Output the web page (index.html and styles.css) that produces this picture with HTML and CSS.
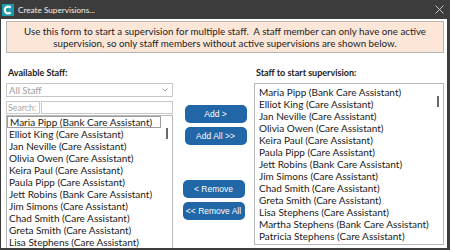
FILE: index.html
```html
<!DOCTYPE html>
<html>
<head>
<meta charset="utf-8">
<link rel="stylesheet" href="styles.css">
</head>
<body>
<div class="window">
  <div class="titlebar">
    <svg class="app-icon" width="12" height="12" viewBox="0 0 12 12">
      <rect width="12" height="12" fill="#1d9bab"/>
      <path d="M8.6 3.6 A3.4 3.4 0 1 0 8.6 8.4" fill="none" stroke="#fff" stroke-width="2.2"/>
    </svg>
    <span class="title">Create Supervisions...</span>
    <svg class="close" width="9" height="9" viewBox="0 0 9 9">
      <path d="M0.5 0.5 L8.5 8.5 M8.5 0.5 L0.5 8.5" stroke="#c8c8c8" stroke-width="1"/>
    </svg>
  </div>
  <div class="content">
    <div class="notice">Use this form to start a supervision for multiple staff.&nbsp; A staff member can only have one active<br>supervision, so only staff members without active supervisions are shown below.</div>
    <div class="panes">
      <div class="pane left">
        <div class="label">Available Staff:</div>
        <div class="select"><span>All Staff</span>
          <svg class="chev" width="6" height="4" viewBox="0 0 6 4"><path d="M0.5 0.5 L3 3 L5.5 0.5" fill="none" stroke="#9a9a9a" stroke-width="0.9"/></svg>
        </div>
        <div class="search">
          <div class="search-label">Search:</div>
          <div class="search-input"></div>
        </div>
        <div class="list list-left">
          <div class="items">
            <div class="item focused">Maria Pipp (Bank Care Assistant)</div>
            <div class="item">Elliot King (Care Assistant)</div>
            <div class="item">Jan Neville (Care Assistant)</div>
            <div class="item">Olivia Owen (Care Assistant)</div>
            <div class="item">Keira Paul (Care Assistant)</div>
            <div class="item">Paula Pipp (Care Assistant)</div>
            <div class="item">Jett Robins (Bank Care Assistant)</div>
            <div class="item">Jim Simons (Care Assistant)</div>
            <div class="item">Chad Smith (Care Assistant)</div>
            <div class="item">Greta Smith (Care Assistant)</div>
            <div class="item">Lisa Stephens (Care Assistant)</div>
          </div>
          <div class="scroll"><div class="thumb"></div></div>
        </div>
      </div>
      <div class="pane middle">
        <div class="btn-group add-group">
          <button class="btn">Add &gt;</button>
          <button class="btn">Add All &gt;&gt;</button>
        </div>
        <div class="btn-group remove-group">
          <button class="btn">&lt; Remove</button>
          <button class="btn">&lt;&lt; Remove All</button>
        </div>
      </div>
      <div class="pane right">
        <div class="label">Staff to start supervision:</div>
        <div class="list list-right">
          <div class="items">
            <div class="item">Maria Pipp (Bank Care Assistant)</div>
            <div class="item">Elliot King (Care Assistant)</div>
            <div class="item">Jan Neville (Care Assistant)</div>
            <div class="item">Olivia Owen (Care Assistant)</div>
            <div class="item">Keira Paul (Care Assistant)</div>
            <div class="item">Paula Pipp (Care Assistant)</div>
            <div class="item">Jett Robins (Bank Care Assistant)</div>
            <div class="item">Jim Simons (Care Assistant)</div>
            <div class="item">Chad Smith (Care Assistant)</div>
            <div class="item">Greta Smith (Care Assistant)</div>
            <div class="item">Lisa Stephens (Care Assistant)</div>
            <div class="item">Martha Stephens (Bank Care Assistant)</div>
            <div class="item">Patricia Stephens (Care Assistant)</div>
          </div>
          <div class="scroll"><div class="thumb"></div></div>
        </div>
      </div>
    </div>
  </div>
</div>
</body>
</html>
```
FILE: styles.css
```css
* { box-sizing: border-box; }
html, body { margin: 0; padding: 0; }
body {
  width: 450px;
  height: 250px;
  overflow: hidden;
  background: #fff;
  font-family: Lato, "Liberation Sans", sans-serif;
  color: #1a1a1a;
}
.window {
  width: 450px;
  height: 250px;
  border-left: 1px solid #3c3c3c;
  border-right: 3px solid #3c3c3c;
  border-bottom: 2px solid #3c3c3c;
  display: flex;
  flex-direction: column;
  overflow: hidden;
}
.titlebar {
  height: 19px;
  flex: none;
  background: #3c3c3c;
  display: flex;
  align-items: center;
  padding-left: 2px;
  padding-right: 6px;
  margin-left: -1px;
  margin-right: -3px;
}
.app-icon { flex: none; margin-top: 1px; }
.title {
  margin-left: 4px;
  font-family: Lato, sans-serif;
  font-size: 8.2px;
  color: #f0f0f0;
  flex: 1;
}
.close { flex: none; }
.content {
  flex: 1;
  padding: 2px 3px 0 5px;
  display: flex;
  flex-direction: column;
  min-height: 0;
}
.notice {
  height: 32px;
  background: #fce6d8;
  border: 1px solid #b4b4b4;
  text-align: center;
  font-size: 9.75px;
  line-height: 12px;
  padding-top: 3px;
  color: #222;
}
.panes {
  flex: 1;
  min-height: 0;
  display: grid;
  grid-template-columns: 167px 81px 190px;
  margin-top: 13px;
}
.pane { display: flex; flex-direction: column; min-height: 0; }
.label {
  font-weight: bold;
  font-size: 9px;
  line-height: 14px;
  height: 14px;
  margin-bottom: 3px;
  padding-left: 2px;
}
.select {
  height: 14px;
  border: 1px solid #c8c8c8;
  display: flex;
  align-items: center;
  justify-content: space-between;
  padding: 0 4px 0 2px;
  font-size: 9.5px;
  color: #a0a0a0;
}
.search {
  display: flex;
  gap: 1px;
  margin-top: 4px;
  height: 13px;
}
.search-label {
  width: 34px;
  flex: none;
  border: 1px solid #c8c8c8;
  font-size: 8.8px;
  line-height: 11px;
  color: #a8a8a8;
  padding-left: 1px;
  white-space: nowrap;
  overflow: hidden;
}
.search-input { flex: 1; border: 1px solid #c8c8c8; }
.list {
  flex: 1;
  min-height: 0;
  border: 1px solid #b8b8b8;
  display: flex;
  overflow: hidden;
}
.list-left { margin-top: 1px; margin-bottom: -10px; }
.list-right { margin-bottom: 3px; }
.items { flex: 1; min-width: 0; }
.list-left .items { padding-top: 0; }
.list-right .items { padding-top: 2px; padding-left: 4px; }
.item {
  font-size: 10px;
  line-height: 12px;
  height: 12px;
  white-space: nowrap;
  padding-left: 2px;
}
.list-right .item { padding-left: 0; }
.item.focused {
  border: 1px solid #a0a0a0;
  line-height: 10px;
}
.scroll {
  width: 11px;
  flex: none;
  display: flex;
  justify-content: center;
}
.list-left .scroll { padding-top: 12px; }
.list-right .scroll { padding-top: 12px; }
.thumb { width: 2px; height: 11px; background: #6a6a6a; }
.middle { align-items: center; }
.btn-group { display: flex; flex-direction: column; gap: 4px; }
.add-group { margin-top: 39px; margin-left: 4px; }
.remove-group { margin-top: 35px; }
.btn {
  width: 62px;
  height: 18px;
  border: none;
  border-radius: 5px;
  background: #2166a6;
  color: #fff;
  font-family: "Liberation Sans", Arial, sans-serif;
  font-size: 8.5px;
  padding: 0;
}
```
